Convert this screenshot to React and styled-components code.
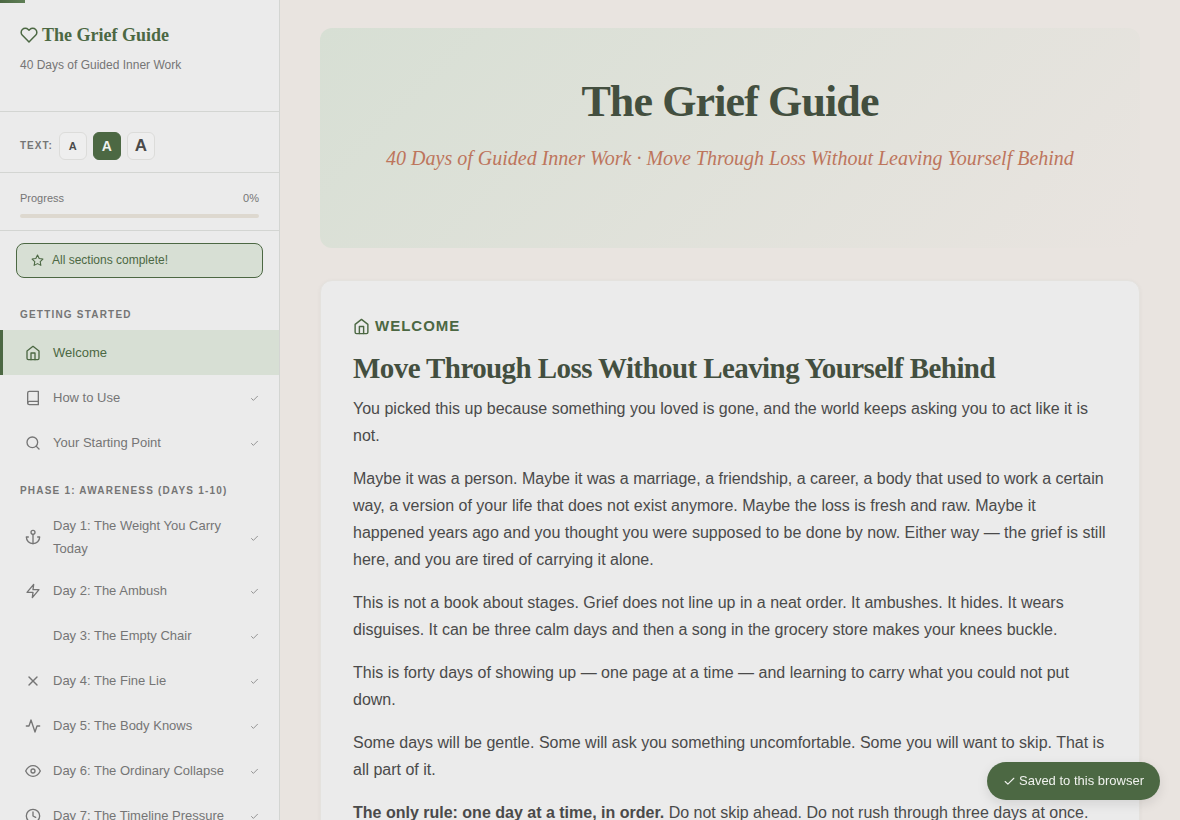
import React from "react";
import styled, { createGlobalStyle, css } from "styled-components";
import {
  FiActivity,
  FiAnchor,
  FiBook,
  FiCheck,
  FiClock,
  FiEye,
  FiHeart,
  FiHome,
  FiSearch,
  FiStar,
  FiX,
  FiZap,
} from "react-icons/fi";

const sans = '"Liberation Sans", Arial, sans-serif';
const serif = '"Liberation Serif", "Times New Roman", serif';

const color = {
  page: "#e9e4e0",
  panel: "#ebebeb",
  line: "#d3d5d2",
  edge: "#e4e2de",
  sage: "#d7dfd4",
  green: "#4c6843",
  deep: "#434f3f",
  clay: "#bd755c",
  text: "#4a4a4a",
  muted: "#757575",
  track: "#ddd8cf",
};

const GlobalStyle = createGlobalStyle`
  * { box-sizing: border-box; }
  body {
    margin: 0;
    background: ${color.page};
    color: ${color.text};
    font-family: ${sans};
    font-size: 16px;
    line-height: 27px;
  }
  h1, h2, h3, p, ul { margin: 0; padding: 0; }
  ul { list-style: none; }
  button { font-family: inherit; cursor: pointer; }
`;

const Page = styled.div`
  display: grid;
  grid-template-columns: 280px minmax(0, 1fr);
  height: 100vh;
`;

const ReadingBar = styled.div`
  position: fixed;
  top: 0;
  left: 0;
  width: 25px;
  height: 3px;
  background: linear-gradient(90deg, ${color.green}, #5f7f56);
`;

const Sidebar = styled.aside`
  overflow-y: auto;
  scrollbar-width: none;
  background: ${color.panel};
  border-right: 1px solid ${color.line};
`;

const SidebarHeader = styled.header`
  padding: 20px 20px 35px;
  border-bottom: 1px solid ${color.line};
`;

const Brand = styled.div`
  display: flex;
  align-items: center;
  gap: 4px;
  color: ${color.green};
  font: bold 18px/30px ${serif};
`;

const Tagline = styled.p`
  margin-top: 4px;
  color: ${color.muted};
  font-size: 12px;
  line-height: 22px;
`;

const TextSize = styled.div`
  display: flex;
  align-items: center;
  gap: 6px;
  padding: 20px 20px 12px;
  border-bottom: 1px solid ${color.line};
`;

const TextSizeLabel = styled.span`
  color: ${color.muted};
  font-size: 10px;
  font-weight: bold;
  letter-spacing: 1px;
  line-height: 20px;
`;

const SizeButton = styled.button`
  display: flex;
  align-items: center;
  justify-content: center;
  width: 28px;
  height: 28px;
  padding: 0;
  border: 1px solid ${(p) => (p.$active ? color.green : "#dcdcda")};
  border-radius: 6px;
  background: ${(p) => (p.$active ? color.green : "#eeeeee")};
  color: ${(p) => (p.$active ? "#f0f2ee" : color.text)};
  font-size: ${(p) => p.$size}px;
  font-weight: bold;
`;

const Progress = styled.div`
  padding: 15px 20px 12px;
  border-bottom: 1px solid ${color.line};
`;

const ProgressText = styled.div`
  display: flex;
  justify-content: space-between;
  margin-bottom: 6px;
  color: ${color.muted};
  font-size: 11px;
  line-height: 20px;
`;

const Track = styled.div`
  height: 4px;
  border-radius: 2px;
  background: ${color.track};
`;

const Banner = styled.div`
  display: flex;
  align-items: center;
  gap: 8px;
  margin: 12px 16px 11px;
  padding: 5px 14px;
  border: 1px solid ${color.green};
  border-radius: 8px;
  background: ${color.sage};
  color: ${color.green};
  font-size: 12px;
  line-height: 23px;
`;

const NavHeading = styled.h3`
  padding: 16px 20px 5px;
  color: ${color.muted};
  font-size: 10px;
  font-weight: bold;
  letter-spacing: 0.12em;
  line-height: 20px;
`;

const NavLink = styled.a`
  display: flex;
  align-items: center;
  gap: 10px;
  min-height: 45px;
  padding: 8px 20px 8px 23px;
  color: ${color.muted};
  font-size: 13px;
  line-height: 23px;
  text-decoration: none;
  ${(p) =>
    p.$active &&
    css`
      padding-left: 20px;
      border-left: 3px solid ${color.green};
      background: ${color.sage};
      color: ${color.green};
    `}
`;

const NavIcon = styled.span`
  display: flex;
  flex: none;
  justify-content: center;
  width: 20px;
`;

const NavLabel = styled.span`
  flex: 1;
`;

const DoneMark = styled.span`
  display: flex;
  padding-top: 2px;
`;

const Main = styled.main`
  overflow-y: auto;
  scrollbar-width: none;
  padding: 28px 40px;
`;

const Hero = styled.header`
  margin-bottom: 32px;
  padding: 47px 32px 73px;
  border-radius: 12px;
  background: linear-gradient(135deg, ${color.sage}, ${color.page});
  text-align: center;
`;

const HeroTitle = styled.h1`
  color: ${color.deep};
  font: bold 44px/54px ${serif};
  letter-spacing: -0.02em;
`;

const HeroSubtitle = styled.p`
  margin-top: 12px;
  color: ${color.clay};
  font: italic 20px/34px ${serif};
`;

const Card = styled.section`
  padding: 32px;
  border: 1px solid ${color.edge};
  border-radius: 12px;
  background: ${color.panel};
  box-shadow: 0 1px 4px rgba(60, 60, 50, 0.05);
`;

const Eyebrow = styled.div`
  display: flex;
  align-items: center;
  gap: 5px;
  color: ${color.green};
  font-size: 15px;
  font-weight: bold;
  letter-spacing: 1px;
  line-height: 26px;
`;

const CardTitle = styled.h2`
  margin: 11px 0 8px;
  color: ${color.deep};
  font: bold 29px/37px ${serif};
  letter-spacing: -0.02em;
`;

const Paragraph = styled.p`
  margin-bottom: 16px;
`;

const Toast = styled.div`
  position: fixed;
  right: 20px;
  bottom: 20px;
  display: flex;
  align-items: center;
  gap: 3px;
  padding: 8px 16px;
  border-radius: 19px;
  background: ${color.green};
  box-shadow: 0 4px 12px rgba(0, 0, 0, 0.1);
  color: #f0f2ee;
  font-size: 13px;
  line-height: 22px;
`;

const sections = [
  {
    title: "GETTING STARTED",
    items: [
      { label: "Welcome", icon: FiHome, active: true },
      { label: "How to Use", icon: FiBook },
      { label: "Your Starting Point", icon: FiSearch },
    ],
  },
  {
    title: "PHASE 1: AWARENESS (DAYS 1-10)",
    items: [
      { label: "Day 1: The Weight You Carry Today", icon: FiAnchor },
      { label: "Day 2: The Ambush", icon: FiZap },
      { label: "Day 3: The Empty Chair" },
      { label: "Day 4: The Fine Lie", icon: FiX },
      { label: "Day 5: The Body Knows", icon: FiActivity },
      { label: "Day 6: The Ordinary Collapse", icon: FiEye },
      { label: "Day 7: The Timeline Pressure", icon: FiClock },
    ],
  },
];

const paragraphs = [
  "You picked this up because something you loved is gone, and the world keeps asking you to act like it is not.",
  "Maybe it was a person. Maybe it was a marriage, a friendship, a career, a body that used to work a certain way, a version of your life that does not exist anymore. Maybe the loss is fresh and raw. Maybe it happened years ago and you thought you were supposed to be done by now. Either way — the grief is still here, and you are tired of carrying it alone.",
  "This is not a book about stages. Grief does not line up in a neat order. It ambushes. It hides. It wears disguises. It can be three calm days and then a song in the grocery store makes your knees buckle.",
  "This is forty days of showing up — one page at a time — and learning to carry what you could not put down.",
  "Some days will be gentle. Some will ask you something uncomfortable. Some you will want to skip. That is all part of it.",
];

export default function App() {
  return (
    <>
      <GlobalStyle />
      <Page>
        <Sidebar>
          <SidebarHeader>
            <Brand>
              <FiHeart size={18} />
              The Grief Guide
            </Brand>
            <Tagline>40 Days of Guided Inner Work</Tagline>
          </SidebarHeader>
          <TextSize role="group" aria-label="Text size">
            <TextSizeLabel>TEXT:</TextSizeLabel>
            <SizeButton type="button" $size={11}>A</SizeButton>
            <SizeButton type="button" $size={14} $active>A</SizeButton>
            <SizeButton type="button" $size={17}>A</SizeButton>
          </TextSize>
          <Progress>
            <ProgressText>
              <span>Progress</span>
              <span>0%</span>
            </ProgressText>
            <Track />
          </Progress>
          <Banner>
            <FiStar size={13} />
            All sections complete!
          </Banner>
          <nav>
            {sections.map((section) => (
              <section key={section.title}>
                <NavHeading>{section.title}</NavHeading>
                <ul>
                  {section.items.map(({ label, icon: Icon, active }) => (
                    <li key={label}>
                      <NavLink href="#" $active={active}>
                        <NavIcon>{Icon && <Icon size={16} />}</NavIcon>
                        <NavLabel>{label}</NavLabel>
                        {!active && (
                          <DoneMark>
                            <FiCheck size={9} />
                          </DoneMark>
                        )}
                      </NavLink>
                    </li>
                  ))}
                </ul>
              </section>
            ))}
          </nav>
        </Sidebar>
        <Main>
          <Hero>
            <HeroTitle>The Grief Guide</HeroTitle>
            <HeroSubtitle>
              40 Days of Guided Inner Work · Move Through Loss Without Leaving Yourself Behind
            </HeroSubtitle>
          </Hero>
          <Card>
            <Eyebrow>
              <FiHome size={17} />
              WELCOME
            </Eyebrow>
            <CardTitle>Move Through Loss Without Leaving Yourself Behind</CardTitle>
            {paragraphs.map((text) => (
              <Paragraph key={text}>{text}</Paragraph>
            ))}
            <Paragraph>
              <strong>The only rule: one day at a time, in order.</strong> Do not skip ahead. Do not
              rush through three days at once.
            </Paragraph>
          </Card>
        </Main>
      </Page>
      <ReadingBar />
      <Toast role="status">
        <FiCheck size={13} />
        Saved to this browser
      </Toast>
    </>
  );
}
